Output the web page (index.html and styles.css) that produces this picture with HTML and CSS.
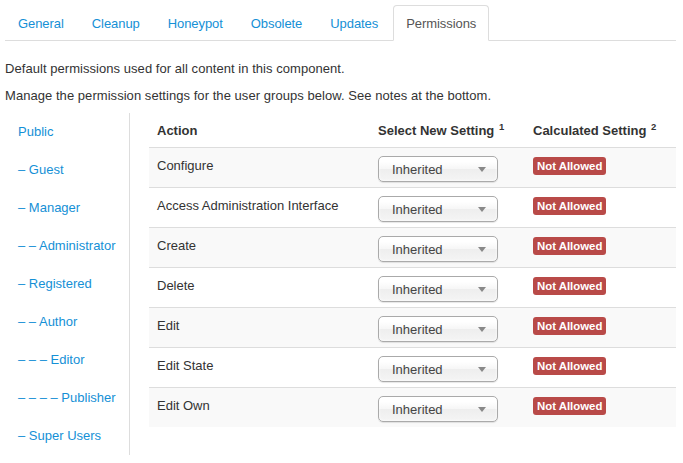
FILE: index.html
```html
<!DOCTYPE html>
<html>
<head>
<meta charset="utf-8">
<link rel="stylesheet" href="styles.css">
</head>
<body>
<ul class="tabs">
  <li><a class="tab">General</a></li>
  <li><a class="tab">Cleanup</a></li>
  <li><a class="tab">Honeypot</a></li>
  <li><a class="tab">Obsolete</a></li>
  <li><a class="tab">Updates</a></li>
  <li><a class="tab active">Permissions</a></li>
</ul>
<p class="desc">Default permissions used for all content in this component.</p>
<p class="desc">Manage the permission settings for the user groups below. See notes at the bottom.</p>
<div class="perm">
  <ul class="groups">
    <li><a>Public</a></li>
    <li><a>&ndash; Guest</a></li>
    <li><a>&ndash; Manager</a></li>
    <li><a>&ndash; &ndash; Administrator</a></li>
    <li><a>&ndash; Registered</a></li>
    <li><a>&ndash; &ndash; Author</a></li>
    <li><a>&ndash; &ndash; &ndash; Editor</a></li>
    <li><a>&ndash; &ndash; &ndash; &ndash; Publisher</a></li>
    <li><a>&ndash; Super Users</a></li>
  </ul>
  <div class="content">
    <table class="table">
      <thead>
        <tr>
          <th class="c1">Action</th>
          <th class="c2">Select New Setting <sup>1</sup></th>
          <th class="c3">Calculated Setting <sup>2</sup></th>
        </tr>
      </thead>
      <tbody>
        <tr><td>Configure</td><td><div class="select">Inherited<span class="caret"></span></div></td><td><span class="label">Not Allowed</span></td></tr>
        <tr><td>Access Administration Interface</td><td><div class="select">Inherited<span class="caret"></span></div></td><td><span class="label">Not Allowed</span></td></tr>
        <tr><td>Create</td><td><div class="select">Inherited<span class="caret"></span></div></td><td><span class="label">Not Allowed</span></td></tr>
        <tr><td>Delete</td><td><div class="select">Inherited<span class="caret"></span></div></td><td><span class="label">Not Allowed</span></td></tr>
        <tr><td>Edit</td><td><div class="select">Inherited<span class="caret"></span></div></td><td><span class="label">Not Allowed</span></td></tr>
        <tr><td>Edit State</td><td><div class="select">Inherited<span class="caret"></span></div></td><td><span class="label">Not Allowed</span></td></tr>
        <tr><td>Edit Own</td><td><div class="select">Inherited<span class="caret"></span></div></td><td><span class="label">Not Allowed</span></td></tr>
      </tbody>
    </table>
  </div>
</div>
</body>
</html>
```

FILE: styles.css
```css
html, body {
  margin: 0;
  padding: 0;
  background: #fff;
}
body {
  padding: 5px 7px 0 5px;
  font-family: "Liberation Sans", Arial, sans-serif;
  font-size: 13px;
  line-height: 18px;
  color: #333;
}
a {
  color: #1590d6;
  text-decoration: none;
}
.tabs {
  list-style: none;
  margin: 0 0 18px 0;
  padding: 0;
  display: flex;
  border-bottom: 1px solid #ddd;
}
.tabs li {
  margin-bottom: -1px;
  margin-right: 2px;
}
.tab {
  display: block;
  padding: 9px 12px 7px;
  line-height: 18px;
  letter-spacing: -0.07px;
  border: 1px solid transparent;
  border-radius: 4px 4px 0 0;
}
.tab.active {
  color: #555;
  background: #fff;
  border-color: #ddd #ddd transparent #ddd;
}
.desc {
  margin: 0 0 8px 0;
  padding-top: 1px;
  letter-spacing: 0.05px;
}
.perm {
  display: flex;
  align-items: flex-start;
}
.groups {
  list-style: none;
  margin: 0;
  padding: 0;
  width: 124px;
  border-right: 1px solid #ddd;
}
.groups li a {
  display: block;
  padding: 9px 12px 7px;
  margin-bottom: 2px;
  border: 1px solid transparent;
  line-height: 18px;
  white-space: nowrap;
}
.content {
  flex: 1;
  padding-left: 19px;
}
.table {
  width: 100%;
  border-collapse: collapse;
  border-spacing: 0;
}
.table th, .table td {
  padding: 9px 8px 7px;
  text-align: left;
  vertical-align: top;
  line-height: 18px;
}
.table th {
  font-weight: bold;
}
.table th sup {
  font-size: 9.5px;
  line-height: 0;
  vertical-align: 5px;
  margin-left: 1px;
}
.c1 { width: 205px; }
.c2 { width: 139px; }
.table td {
  border-top: 1px solid #ddd;
  padding-bottom: 5px;
}
.table tbody tr:nth-child(odd) td {
  background: #f9f9f9;
}
.select {
  position: relative;
  box-sizing: border-box;
  width: 120px;
  height: 26px;
  padding: 0 0 0 13px;
  line-height: 26px;
  font-size: 13px;
  color: #444;
  border: 1px solid #aaa;
  border-radius: 5px;
  background: linear-gradient(#ffffff 20%, #f6f6f6 50%, #eeeeee 52%, #f4f4f4 100%);
  box-shadow: 0 0 3px #fff inset, 0 1px 1px rgba(0,0,0,0.1);
  margin-top: -1px;
}
.caret {
  position: absolute;
  right: 11px;
  top: 10px;
  width: 0;
  height: 0;
  border-left: 4px solid transparent;
  border-right: 4px solid transparent;
  border-top: 5px solid #888;
}
.label {
  display: inline-block;
  padding: 2px 4px;
  font-size: 11.4px;
  font-weight: bold;
  line-height: 14px;
  color: #fff;
  background: #b94a48;
  border-radius: 3px;
  margin-top: 0;
  white-space: nowrap;
}
```
